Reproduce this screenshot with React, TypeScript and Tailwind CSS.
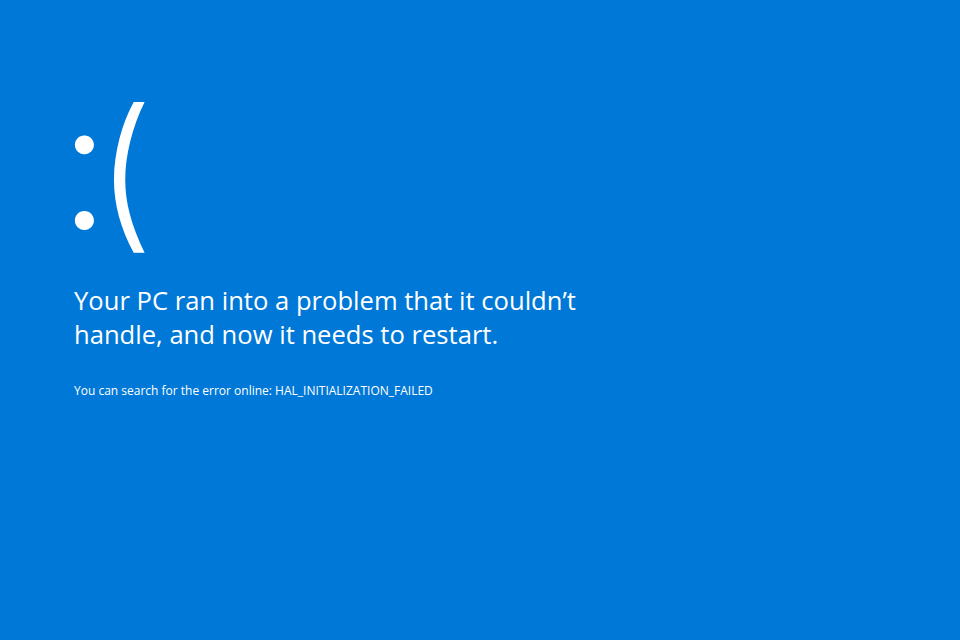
export default function App() {
  return (
    <div className="w-[960px] h-[640px] bg-[#0078d7] text-white overflow-hidden pl-[74px] pt-[70px]" style={{ fontFamily: '"Open Sans", "Noto Sans", sans-serif' }}>
      {/* Sad face */}
      <div className="flex items-start h-[200px] font-light" style={{ fontFamily: 'Inter, sans-serif' }}>
        <span className="text-[180px] leading-[200px] -ml-[15px] -mt-[6px] tracking-[-24px]">:</span>
        <span className="text-[166px] leading-[200px] ml-[10px]">(</span>
      </div>

      <p className="mt-[14px] text-[25.6px] leading-[34px] w-[580px]">
        Your PC ran into a problem that it couldn’t handle, and now it needs to restart.
      </p>

      <p className="mt-[29px] text-[12px] leading-[20px]">
        You can search for the error online: HAL_INITIALIZATION_FAILED
      </p>
    </div>
  )
}
